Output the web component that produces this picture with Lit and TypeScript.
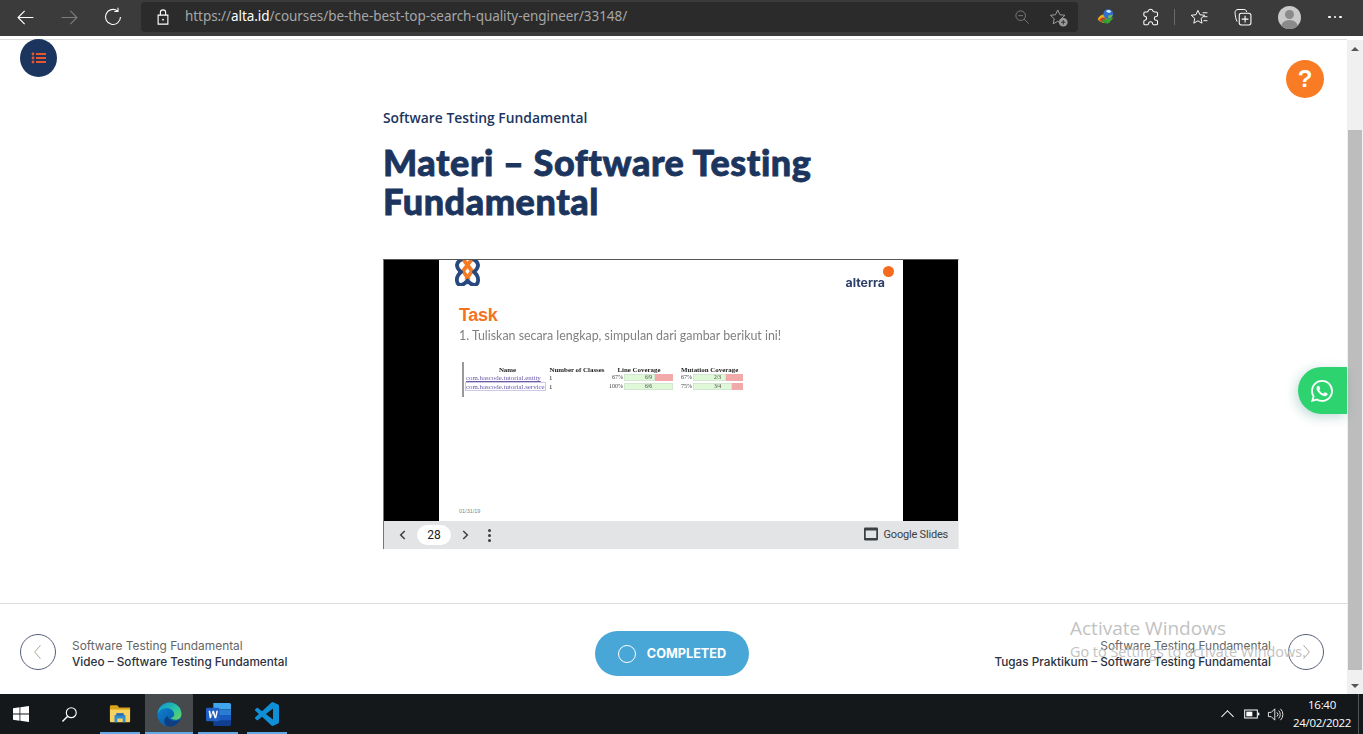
import { LitElement, html, css, svg } from 'lit';
import { customElement } from 'lit/decorators.js';

// coverage rows of the table shown on the slide
const coverageRows = [
  { name: 'com.hascode.tutorial.entity', classes: '1', linePct: '67%', line: '6/9', lineOk: 64, mutPct: '67%', mut: '2/3', mutOk: 66, boxed: false },
  { name: 'com.hascode.tutorial.service', classes: '1', linePct: '100%', line: '6/6', lineOk: 100, mutPct: '75%', mut: '3/4', mutOk: 78, boxed: true },
];

const icon = (w: number, body: unknown, box = '0 0 24 24') =>
  html`<svg width=${w} height=${w} viewBox=${box} aria-hidden="true">${body}</svg>`;

const backIcon = svg`<path d="M21 12H4M11 4.5 3.5 12l7.5 7.5" fill="none" stroke="#fff" stroke-width="1.3"/>`;
const forwardIcon = svg`<path d="M3 12h17M13 4.5l7.5 7.5-7.5 7.5" fill="none" stroke="#7c7c7c" stroke-width="1.3"/>`;
const reloadIcon = svg`<path d="M17.5 4.8A9 9 0 1 0 21 12M18 1v4.4h-4.4" fill="none" stroke="#fff" stroke-width="1.3"/>`;
const lockIcon = svg`<path d="M5.5 9.5h13v12h-13zM8.5 9.5V6a3.5 3.5 0 0 1 7 0v3.5" fill="none" stroke="#fff" stroke-width="1.5"/><circle cx="12" cy="15.5" r="1.2" fill="#fff"/>`;
const zoomOutIcon = svg`<circle cx="10" cy="10" r="7.2" fill="none" stroke="#8b8b8b" stroke-width="1.2"/><path d="M6.5 10h7M15.2 15.2 22 22" fill="none" stroke="#8b8b8b" stroke-width="1.2"/>`;
const favAddIcon = svg`<path d="M11 2.5l2.8 6 6.4.7-4.8 4.4 1.3 6.4-5.7-3.3-5.7 3.3 1.3-6.4L1.800 9.200l6.400-.7z" fill="none" stroke="#a0a0a0" stroke-width="1.200"/><circle cx="18" cy="18" r="5.500" fill="#9a9a9a"/><path d="M18 15.200v5.600M15.200 18h5.600" stroke="#333" stroke-width="1.300"/>`;
const puzzleIcon = svg`<path d="M9.500 4.500a2.700 2.700 0 0 1 5.200 0c.2 1 .8 1.200 1.800 1.200h2.200c.8 0 1.300.5 1.300 1.300v2.700c0 .8-.7 1-1.400 1.100a2.200 2.200 0 0 0 0 4.400c.7.100 1.400.3 1.400 1.100V19c0 .8-.5 1.300-1.300 1.300h-3.300c-.7 0-.9-.6-1-1.200a2.300 2.300 0 0 0-4.600 0c-.1.600-.3 1.200-1 1.200H5.700c-.8 0-1.300-.5-1.300-1.300v-2.800c0-.7.600-.9 1.200-1a2.400 2.400 0 0 0 0-4.700c-.6-.1-1.200-.3-1.200-1V7c0-.8.500-1.300 1.300-1.300H8c.8 0 1.300-.3 1.500-1.200z" fill="none" stroke="#fff" stroke-width="1.200"/>`;
const favsIcon = svg`<path d="M10 3l2.500 5.500 6 .7-4.500 4 1.200 6-5.200-3-5.200 3 1.200-6-4.500-4 6-.7z" fill="none" stroke="#fff" stroke-width="1.200"/><path d="M16 6h6M17 11h5M17 16h5" stroke="#fff" stroke-width="1.200"/>`;
const collectionsIcon = svg`<path d="M5 17.500C3.500 16 2.500 9 2.500 6.500c0-2 1.500-3.500 3.500-3.500h7c2 0 3 .8 3.500 3" fill="none" stroke="#fff" stroke-width="1.200"/><rect x="7.500" y="7.500" width="14" height="14" rx="2.500" fill="none" stroke="#fff" stroke-width="1.300"/><path d="M14.500 10.500v8M10.500 14.500h8" stroke="#fff" stroke-width="1.300"/>`;
const idmIcon = svg`
  <path d="M1 15c2-5 6-7 10-6l6 3-7 8c-4-1-7-2-9-5z" fill="#e3b21e"/>
  <path d="M3 16c2-3 4-4 7-3l4 2-4 4c-3 0-5-1-7-3z" fill="#d8322a"/>
  <path d="M7 15l6 1-2 5-4-3z" fill="#2c9c35"/>
  <path d="M10 14l12-1-6 7-3 1z" fill="#3fa52f"/>
  <circle cx="15" cy="8" r="6.500" fill="#2f6fd0"/>
  <path d="M12 4c2-2 6-1.500 7 1l-3 1.500c-2-.5-3-1-4-2.500z" fill="#d9e9f5"/>
  <path d="M15 10l6-1c-1 3-3 5-6 4.500z" fill="#79b843"/>`;
const googleSlidesIcon = svg`<path d="M2 1h20c1 0 2 1 2 2v18c0 1-1 2-2 2H2c-1 0-2-1-2-2V3c0-1 1-2 2-2zm1 5v13h18V6z" fill="#3c4043"/>`;
const whatsappIcon = svg`<path fill="#fff" d="M17.472 14.382c-.297-.149-1.758-.867-2.03-.967-.273-.099-.471-.148-.67.15-.197.297-.767.966-.94 1.164-.173.199-.347.223-.644.075-.297-.15-1.255-.463-2.39-1.475-.883-.788-1.48-1.761-1.653-2.059-.173-.297-.018-.458.13-.606.134-.133.298-.347.446-.52.149-.174.198-.298.298-.497.099-.198.05-.371-.025-.52-.075-.149-.669-1.612-.916-2.207-.242-.579-.487-.5-.669-.51-.173-.008-.371-.01-.57-.01-.198 0-.52.074-.792.372-.272.297-1.04 1.016-1.04 2.479 0 1.462 1.065 2.875 1.213 3.074.149.198 2.096 3.2 5.077 4.487.709.306 1.262.489 1.694.625.712.227 1.36.195 1.871.118.571-.085 1.758-.719 2.006-1.413.248-.694.248-1.289.173-1.413-.074-.124-.272-.198-.57-.347m-5.421 7.403h-.004a9.87 9.87 0 01-5.031-1.378l-.361-.214-3.741.982.998-3.648-.235-.374a9.86 9.86 0 01-1.51-5.26c.001-5.45 4.436-9.884 9.888-9.884 2.64 0 5.122 1.03 6.988 2.898a9.825 9.825 0 012.893 6.994c-.003 5.45-4.437 9.884-9.885 9.884m8.413-18.297A11.815 11.815 0 0012.05 0C5.495 0 .16 5.335.157 11.892c0 2.096.547 4.142 1.588 5.945L.057 24l6.305-1.654a11.882 11.882 0 005.683 1.448h.005c6.554 0 11.89-5.335 11.893-11.893a11.821 11.821 0 00-3.48-8.413z"/>`;
const listIcon = svg`<g fill="#e8562e"><circle cx="2" cy="4" r="1.400"/><circle cx="2" cy="8" r="1.400"/><circle cx="2" cy="12" r="1.400"/><rect x="5" y="3" width="10" height="2"/><rect x="5" y="7" width="10" height="2"/><rect x="5" y="11" width="10" height="2"/></g>`;
const slideLogo = svg`
  <g fill="none" stroke-width="3.800" stroke-linejoin="round">
    <path d="M8 -1 L17 11 L11 20 M17 -1 L8 11 L14 20" stroke="#f47a26"/>
    <path d="M7 -1 C1 2 0 7 6 12 C0 17 1 25 6 25 C9 25 11 22 12.500 20.500 C14 22 16 25 19 25 C24 25 25 17 19 12 C25 7 24 2 18 -1" stroke="#27497f"/>
  </g>`;
const winLogo = svg`<path fill="#fff" d="M0 3.200 9.800 1.900v9.500H0zM11 1.700 24 0v11.400H11zM0 12.600h9.800v9.500L0 20.800zM11 12.600h13V24l-13-1.700z"/>`;
const searchIcon = svg`<circle cx="14.500" cy="9.500" r="7" fill="none" stroke="#fff" stroke-width="1.600"/><path d="M9.500 14.500 2 22" stroke="#fff" stroke-width="2"/>`;
const explorerIcon = svg`
  <path d="M1 4c0-1 .5-1.500 1.500-1.500H9L11 5h12v4H1z" fill="#d9a21b"/>
  <path d="M1 7h22v13c0 .6-.4 1-1 1H2c-.6 0-1-.4-1-1z" fill="#f8d15e"/>
  <path d="M6 13h12v8H15v-4H9v4H6z" fill="#2f8fd3"/>
  <path d="M8 11h8v3H8z" fill="#2d6fb0"/>`;
const edgeIcon = svg`
  <defs>
    <linearGradient id="edge-a" x1="0" y1="0" x2="1" y2="1"><stop offset="0" stop-color="#0c8fd4"/><stop offset=".55" stop-color="#2bc4a5"/><stop offset="1" stop-color="#6ed35a"/></linearGradient>
    <linearGradient id="edge-b" x1="0" y1="0" x2="1" y2="1"><stop offset="0" stop-color="#0e86d8"/><stop offset="1" stop-color="#0a4f98"/></linearGradient>
  </defs>
  <circle cx="12" cy="12" r="11.500" fill="url(#edge-b)"/>
  <path d="M13 17c2.500 1.800 6.500 1.500 9.500-.5-1.800 4-5.500 7-10.500 7-3 0-5-2-5-5s2-4.500 4-5c-1 1-.5 2.500 2 3.500z" fill="#0d3f82"/>
  <path d="M.5 11.500C1 5.500 6 .5 12 .5c6.500 0 11.500 5 11.500 11 0 3.500-2.500 5.500-5.500 5.500-2.500 0-4.500-.8-4.800-1.600 2-.4 3.300-1.600 3.300-3.400 0-3.500-3-6-7-6-4 0-7.500 2-9 5.500z" fill="url(#edge-a)"/>`;
const wordIcon = svg`
  <path d="M7 1h15.500c.8 0 1.500.7 1.500 1.500V7H7z" fill="#41a5ee"/>
  <path d="M7 7h17v5.500H7z" fill="#2b7cd3"/>
  <path d="M7 12.500h17V18H7z" fill="#185abd"/>
  <path d="M7 18h17v3.500c0 .8-.7 1.500-1.500 1.500h-14C7.700 23 7 22.300 7 21.500z" fill="#103f91"/>
  <rect x="0" y="5.500" width="13" height="13" rx="1.300" fill="#1f5fc4"/>
  <path d="M2.500 8.500h1.500l1 5 1.300-5h1.400l1.300 5 1-5h1.500l-1.700 7.200H8.300L6.500 10.500l-1.800 5.200H3.500z" fill="#fff"/>`;
const vscodeIcon = svg`<path fill="#0f8fd8" d="M23.15 2.587L18.21.21a1.494 1.494 0 0 0-1.705.29l-9.46 8.63-4.12-3.128a.999.999 0 0 0-1.276.057L.327 7.261A1 1 0 0 0 .326 8.74L3.899 12 .326 15.26a1 1 0 0 0 .001 1.479L1.65 17.94a.999.999 0 0 0 1.276.057l4.12-3.128 9.46 8.63a1.492 1.492 0 0 0 1.704.29l4.942-2.377A1.5 1.5 0 0 0 24 20.06V3.939a1.5 1.5 0 0 0-.85-1.352zm-5.146 14.861L10.826 12l7.178-5.448v10.896z"/>`;
const batteryIcon = svg`<rect x="1" y="6" width="19" height="12" fill="none" stroke="#fff" stroke-width="1.500"/><rect x="3.500" y="8.500" width="9" height="7" fill="#fff"/><rect x="21" y="10" width="2" height="4" fill="#fff"/>`;
const volumeIcon = svg`<path d="M2 9h4l5-5v16l-5-5H2z" fill="none" stroke="#fff" stroke-width="1.200"/><path d="M14 9a4 4 0 0 1 0 6M16.500 6.500a8 8 0 0 1 0 11M19 4a11 11 0 0 1 0 16" fill="none" stroke="#fff" stroke-width="1.200"/>`;

@customElement('app-root')
export class AppRoot extends LitElement {
  static styles = css`
    :host {
      display: flex;
      flex-direction: column;
      width: 1363px;
      height: 734px;
      overflow: hidden;
      background: #fff;
      font-family: "Open Sans", sans-serif;
    }
    svg { display: block; }

    /* browser chrome */
    .toolbar {
      display: flex;
      align-items: center;
      flex: none;
      height: 36px;
      padding: 0 6px 2px 3px;
      box-sizing: border-box;
      background: #3b3b3b;
    }
    .slot {
      display: flex;
      align-items: center;
      justify-content: center;
      flex: none;
      width: 44px;
      height: 30px;
    }
    .slot.spaced { margin-left: 2px; }
    .address {
      display: flex;
      align-items: center;
      flex: 1;
      height: 30px;
      margin: 0 6px 0 6px;
      padding-right: 1px;
      border-radius: 4px;
      background: #2b2b2b;
    }
    .lock { margin-left: 13px; }
    .url {
      flex: 1;
      margin-left: 13px;
      padding-bottom: 2px;
      color: #a6a6a6;
      font-family: "Noto Sans", sans-serif;
      font-size: 13.500px;
      white-space: nowrap;
      letter-spacing: -0.06px;
    }
    .url b { color: #fff; font-weight: 400; }
    .address .slot { width: 37px; }
    .sep { flex: none; width: 1px; height: 16px; margin: 0 2px 0 2px; background: #6a6a6a; }
    .avatar {
      position: relative;
      width: 23px;
      height: 23px;
      border-radius: 50%;
      overflow: hidden;
      background: #c9c9c9;
    }
    .avatar::before {
      content: "";
      position: absolute;
      left: 7px;
      top: 4px;
      width: 9px;
      height: 9px;
      border-radius: 50%;
      background: #8a8a8a;
    }
    .avatar::after {
      content: "";
      position: absolute;
      left: 3px;
      top: 14px;
      width: 17px;
      height: 14px;
      border-radius: 50%;
      background: #8a8a8a;
    }
    .dots { display: flex; gap: 3px; }
    .dots i { width: 2.500px; height: 2.500px; border-radius: 50%; background: #fff; }

    /* page */
    .viewport { display: flex; flex: 1; min-height: 0; }
    .main {
      position: relative;
      display: flex;
      flex-direction: column;
      flex: 1;
      min-width: 0;
    }
    .top-line { flex: none; height: 1px; margin-top: 3px; background: #ddd; }
    .content { flex: 1; padding: 68px 0 0 383px; box-sizing: border-box; }
    .eyebrow {
      height: 20px;
      color: #1b355e;
      font-size: 13.850px;
      font-weight: 600;
      line-height: 20px;
    }
    h1 {
      width: 560px;
      margin: 15px 0 38px;
      color: #1b355e;
      font-family: Lato, sans-serif;
      font-size: 36px;
      font-weight: 900;
      line-height: 39px;
      letter-spacing: 0.55px;
      -webkit-text-stroke: 0.8px #1b355e;
    }

    /* google slides embed */
    .embed {
      display: flex;
      flex-direction: column;
      width: 576px;
      height: 290px;
      box-sizing: border-box;
      border-top: 1px solid #555;
      border-left: 1px solid #777;
      border-right: 1px solid #eee;
    }
    .stage {
      display: flex;
      flex: 1;
      justify-content: center;
      min-height: 0;
      background: #000;
    }
    .slide {
      display: flex;
      flex-direction: column;
      width: 464px;
      padding: 0 9px 6px 20px;
      box-sizing: border-box;
      background: #fff;
    }
    .slide-head { display: flex; justify-content: space-between; height: 29px; }
    .slide-logo { margin-left: -4px; }
    .alterra {
      position: relative;
      align-self: flex-end;
      margin-bottom: -1px;
      padding-right: 9px;
      color: #2d3f69;
      font-family: Inter, sans-serif;
      font-size: 12.300px;
      font-weight: 700;
      line-height: 14px;
      filter: blur(0.2px);
    }
    .alterra::after {
      content: "";
      position: absolute;
      right: 0;
      top: -10px;
      width: 11px;
      height: 11px;
      border-radius: 50%;
      background: #f56a1d;
    }
    .slide-title {
      margin-top: 15px;
      color: #f47321;
      font-family: "Liberation Sans", sans-serif;
      font-size: 18px;
      font-weight: 700;
      line-height: 22px;
      letter-spacing: -0.3px;
    }
    .slide-text {
      margin-top: 2px;
      color: #808080;
      font-family: Lato, sans-serif;
      font-size: 12.400px;
      line-height: 16px;
      filter: blur(0.25px);
    }
    .coverage {
      display: grid;
      grid-template-columns: 83px 56px 19px 49px 8px 12px 50px;
      grid-auto-rows: 8.500px;
      align-items: center;
      width: 290px;
      height: 35px;
      margin: 18px 0 0 3px;
      padding-left: 2px;
      padding-top: 3px;
      box-sizing: border-box;
      border-left: 2px solid #999;
      color: #222;
      font-family: "Liberation Serif", serif;
      font-size: 6.900px;
      line-height: 7px;
      white-space: nowrap;
      filter: blur(0.4px);
    }
    .coverage .head { font-weight: 700; text-align: center; }
    .coverage .span-2 { grid-column: span 2; }
    .coverage .mutation { padding-right: 5px; }
    .coverage .name { justify-self: start; color: #6a5aa8; text-decoration: underline; }
    .coverage .boxed { outline: 1px solid #cdc8e6; }
    .coverage .pct { justify-self: end; padding-right: 1px; color: #444; font-size: 6px; }
    .bar { display: flex; height: 7px; background: #f2a9a9; }
    .bar span {
      display: block;
      box-sizing: border-box;
      border: 1px solid #d2e6d2;
      background: #dff8d8;
      color: #444;
      font-size: 5.600px;
      line-height: 5px;
      padding-left: 20px;
    }
    .slide-date {
      margin-top: auto;
      color: #888;
      font-family: "Liberation Sans", sans-serif;
      font-size: 5.500px;
      line-height: 8px;
    }
    .controls {
      display: flex;
      align-items: center;
      flex: none;
      height: 28px;
      padding-left: 12px;
      background: #e3e4e6;
      color: #3c4043;
      font-family: Roboto, sans-serif;
    }
    .page-no {
      width: 34px;
      height: 20px;
      margin: 0 7px 0 7px;
      border-radius: 10px;
      background: #fff;
      color: #202124;
      font-size: 12px;
      line-height: 20px;
      text-align: center;
    }
    .vdots { display: flex; flex-direction: column; gap: 2px; margin-left: 16px; }
    .vdots i { width: 3px; height: 3px; border-radius: 50%; background: #3c4043; }
    .brand {
      display: flex;
      align-items: center;
      gap: 6px;
      margin-left: auto;
      margin-right: 10px;
      padding-bottom: 2px;
      font-size: 11px;
      letter-spacing: -0.2px;
    }

    /* lesson navigation */
    .lesson-nav {
      display: grid;
      grid-template-columns: 1fr auto 1fr;
      align-items: center;
      flex: none;
      height: 91px;
      padding: 9px 23px 0 20px;
      box-sizing: border-box;
      border-top: 1px solid #ddd;
    }
    .nav-link { display: flex; align-items: center; gap: 16px; }
    .nav-link.next { justify-content: flex-end; gap: 17px; text-align: right; }
    .circle {
      display: flex;
      align-items: center;
      justify-content: center;
      flex: none;
      width: 34px;
      height: 34px;
      margin-bottom: 3px;
      border: 1px solid #57607a;
      border-radius: 50%;
    }
    .nav-text { font-family: Inter, sans-serif; line-height: 16px; white-space: nowrap; }
    .nav-text small { display: block; color: #666; font-size: 11.900px; }
    .nav-text span { display: block; color: #2c3140; font-size: 11.750px; font-weight: 500; }
    .complete {
      display: flex;
      align-items: center;
      gap: 11px;
      height: 45px;
      padding: 0 23px 0 23px;
      border: 0;
      border-radius: 23px;
      background: #49a7d7;
      color: #fff;
      font-family: Inter, sans-serif;
      font-size: 12.700px;
      font-weight: 700;
    }
    .complete i { width: 16px; height: 16px; border: 1px solid #fff; border-radius: 50%; }

    /* floating things over the page */
    .menu-btn {
      position: absolute;
      left: 20px;
      top: 3px;
      display: flex;
      align-items: center;
      justify-content: center;
      width: 37px;
      height: 38px;
      border-radius: 50%;
      background: #1b355e;
    }
    .help-btn {
      position: absolute;
      left: 1286px;
      top: 24px;
      width: 38px;
      height: 38px;
      border-radius: 50%;
      background: #f97b24;
      color: #fff;
      font-family: "Liberation Sans", sans-serif;
      font-size: 24px;
      font-weight: 700;
      line-height: 38px;
      text-align: center;
    }
    .chat-btn {
      position: absolute;
      right: 0;
      top: 331px;
      display: flex;
      align-items: center;
      justify-content: center;
      width: 49px;
      height: 47px;
      padding-right: 1px;
      box-sizing: border-box;
      border-radius: 24px 0 0 24px;
      background: #2dd36f;
      box-shadow: -2px 3px 12px rgba(30, 120, 110, 0.28);
    }
    .watermark {
      position: absolute;
      left: 1070px;
      top: 580px;
      color: #c2c2c2;
      font-family: "Open Sans", sans-serif;
      pointer-events: none;
      white-space: nowrap;
    }
    .watermark div:first-child { font-size: 19px; line-height: 24px; }
    .watermark div:last-child { margin-top: 2px; font-size: 14.400px; line-height: 20px; }

    .scrollbar {
      display: flex;
      flex-direction: column;
      flex: none;
      width: 16px;
      margin-top: 4px;
      background: #f0f0f0;
    }
    .arrow { display: flex; align-items: center; justify-content: center; flex: none; height: 17px; }
    .arrow.up::after { content: ""; border: 4px solid transparent; border-top: 0; border-bottom: 4px solid #555; }
    .arrow.down::after { content: ""; border: 4px solid transparent; border-bottom: 0; border-top: 4px solid #555; }
    .track { flex: 1; padding: 73px 1px 0; }
    .thumb { height: 540px; background: #bdbdbd; }

    /* windows taskbar */
    .taskbar {
      display: flex;
      align-items: center;
      flex: none;
      height: 40px;
      background: #15181b;
      color: #fff;
    }
    .task { display: flex; align-items: center; justify-content: center; flex: none; height: 40px; box-sizing: border-box; }
    .task.start { width: 42px; }
    .task.search { width: 54px; }
    .task.app { width: 40px; margin-left: 4px; border-bottom: 2px solid #64a8e4; padding-top: 2px; }
    .task.app.edge { width: 48px; margin-left: 5px; background: #474a4c; }
    .task.app.word { margin-left: 5px; }
    .task.app.code { margin-left: 9px; }
    .tray { display: flex; align-items: center; gap: 7px; margin-left: auto; }
    .chevron { width: 8px; height: 8px; margin: 5px 5px 0 0; border-left: 1px solid #fff; border-top: 1px solid #fff; transform: rotate(45deg); }
    .clock {
      width: 72px;
      margin-left: -5px;
      font-family: "Open Sans", sans-serif;
      font-size: 11.500px;
      letter-spacing: -0.3px;
      line-height: 18px;
      text-align: center;
    }
    .desktop-edge { flex: none; width: 1px; height: 40px; margin-right: 4px; background: #555; }
  `;

  private renderToolbar() {
    return html`
      <div class="toolbar">
        <div class="slot">${icon(21, backIcon)}</div>
        <div class="slot">${icon(21, forwardIcon)}</div>
        <div class="slot">${icon(20, reloadIcon)}</div>
        <div class="address">
          <div class="lock">${icon(18, lockIcon)}</div>
          <div class="url">https://<b>alta.id</b>/courses/be-the-best-top-search-quality-engineer/33148/</div>
          <div class="slot">${icon(16, zoomOutIcon)}</div>
          <div class="slot">${icon(19, favAddIcon)}</div>
        </div>
        <div class="slot">${icon(18, idmIcon)}</div>
        <div class="slot">${icon(21, puzzleIcon)}</div>
        <div class="sep"></div>
        <div class="slot">${icon(19, favsIcon)}</div>
        <div class="slot">${icon(20, collectionsIcon)}</div>
        <div class="slot spaced"><div class="avatar"></div></div>
        <div class="slot spaced"><div class="dots"><i></i><i></i><i></i></div></div>
      </div>
    `;
  }

  private renderSlide() {
    return html`
      <div class="slide">
        <div class="slide-head">
          <div class="slide-logo">${icon(26, slideLogo, '0 0 26 26')}</div>
          <div class="alterra">alterra</div>
        </div>
        <div class="slide-title">Task</div>
        <div class="slide-text">1. Tuliskan secara lengkap, simpulan dari gambar berikut ini!</div>
        <div class="coverage">
          <div class="head">Name</div>
          <div class="head">Number of Classes</div>
          <div class="head span-2">Line Coverage</div>
          <div></div>
          <div class="head span-2 mutation">Mutation Coverage</div>
          ${coverageRows.map(
            (r) => html`
              <div class="name ${r.boxed ? 'boxed' : ''}">${r.name}</div>
              <div>${r.classes}</div>
              <div class="pct">${r.linePct}</div>
              <div class="bar"><span style="width: ${r.lineOk}%">${r.line}</span></div>
              <div></div>
              <div class="pct">${r.mutPct}</div>
              <div class="bar"><span style="width: ${r.mutOk}%">${r.mut}</span></div>
            `,
          )}
        </div>
        <div class="slide-date">01/31/19</div>
      </div>
    `;
  }

  private renderEmbed() {
    return html`
      <div class="embed">
        <div class="stage">${this.renderSlide()}</div>
        <div class="controls">
          ${icon(14, svg`<path d="M15 5l-7 7 7 7" fill="none" stroke="#3c4043" stroke-width="2.600"/>`)}
          <div class="page-no">28</div>
          ${icon(14, svg`<path d="M9 5l7 7-7 7" fill="none" stroke="#3c4043" stroke-width="2.600"/>`)}
          <div class="vdots"><i></i><i></i><i></i></div>
          <div class="brand">${icon(14, googleSlidesIcon)}Google Slides</div>
        </div>
      </div>
    `;
  }

  private renderLessonNav() {
    return html`
      <div class="lesson-nav">
        <div class="nav-link">
          <div class="circle">${icon(20, svg`<path d="M15 4l-7 8 7 8" fill="none" stroke="#a8a08a" stroke-width="1.100"/>`)}</div>
          <div class="nav-text"><small>Software Testing Fundamental</small><span>Video – Software Testing Fundamental</span></div>
        </div>
        <button class="complete"><i></i>COMPLETED</button>
        <div class="nav-link next">
          <div class="nav-text"><small>Software Testing Fundamental</small><span>Tugas Praktikum – Software Testing Fundamental</span></div>
          <div class="circle">${icon(20, svg`<path d="M9 4l7 8-7 8" fill="none" stroke="#a8a08a" stroke-width="1.100"/>`)}</div>
        </div>
      </div>
    `;
  }

  private renderTaskbar() {
    return html`
      <div class="taskbar">
        <div class="task start">${icon(16, winLogo)}</div>
        <div class="task search">${icon(17, searchIcon)}</div>
        <div class="task app">${icon(22, explorerIcon)}</div>
        <div class="task app edge">${icon(25, edgeIcon)}</div>
        <div class="task app word">${icon(25, wordIcon)}</div>
        <div class="task app code">${icon(24, vscodeIcon)}</div>
        <div class="tray">
          <div class="chevron"></div>
          ${icon(16, batteryIcon)}
          ${icon(17, volumeIcon)}
          <div class="clock">16:40<br />24/02/2022</div>
        </div>
        <div class="desktop-edge"></div>
      </div>
    `;
  }

  render() {
    return html`
      ${this.renderToolbar()}
      <div class="viewport">
        <div class="main">
          <div class="top-line"></div>
          <div class="content">
            <div class="eyebrow">Software Testing Fundamental</div>
            <h1>Materi – Software Testing Fundamental</h1>
            ${this.renderEmbed()}
          </div>
          ${this.renderLessonNav()}
          <div class="menu-btn">${icon(16, listIcon, '0 0 16 16')}</div>
          <div class="help-btn">?</div>
          <div class="chat-btn">${icon(22, whatsappIcon)}</div>
          <div class="watermark"><div>Activate Windows</div><div>Go to Settings to activate Windows.</div></div>
        </div>
        <div class="scrollbar">
          <div class="arrow up"></div>
          <div class="track"><div class="thumb"></div></div>
          <div class="arrow down"></div>
        </div>
      </div>
      ${this.renderTaskbar()}
    `;
  }
}
